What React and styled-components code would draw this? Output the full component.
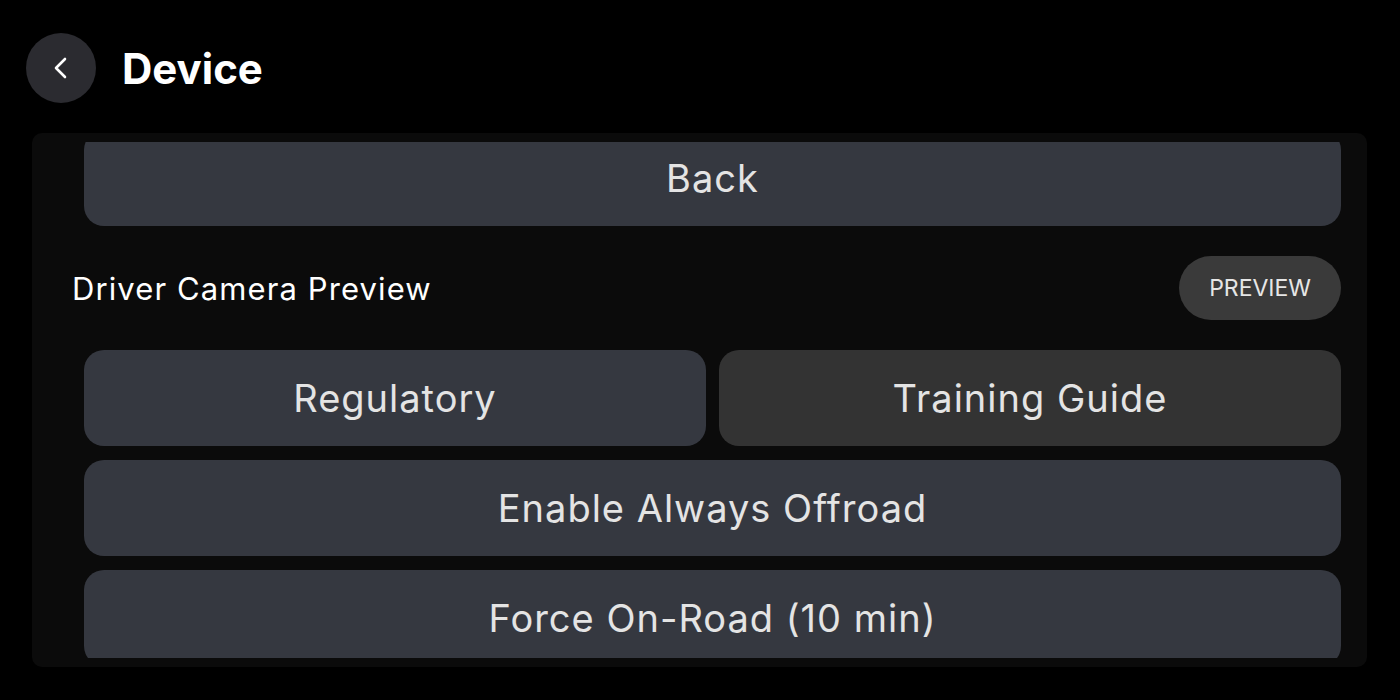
import React, { useLayoutEffect, useRef } from 'react';
import styled, { createGlobalStyle } from 'styled-components';

const GlobalStyle = createGlobalStyle`
  html, body {
    margin: 0;
    padding: 0;
    background: #000;
    font-family: Inter, "Noto Sans", sans-serif;
    -webkit-font-smoothing: antialiased;
  }
  * {
    box-sizing: border-box;
  }
`;

const Page = styled.div`
  width: 1400px;
  height: 700px;
  padding: 33px 33px 33px 26px;
  display: flex;
  flex-direction: column;
  gap: 30px;
  background: #000;
  overflow: hidden;
`;

const Header = styled.header`
  display: flex;
  align-items: center;
  gap: 26px;
  height: 70px;
  flex-shrink: 0;
`;

const BackCircle = styled.button`
  width: 70px;
  height: 70px;
  border-radius: 50%;
  border: none;
  padding: 0;
  background: #2b2b30;
  color: #fff;
  display: flex;
  align-items: center;
  justify-content: center;
  cursor: pointer;
`;

const Title = styled.h1`
  margin: 0;
  font-size: 42px;
  font-weight: 700;
  color: #fff;
`;

const Panel = styled.section`
  flex: 1;
  margin-left: 6px;
  background: #0b0b0b;
  border-radius: 10px;
  padding: 9px 0;
  display: flex;
  min-height: 0;
`;

const ScrollArea = styled.div`
  flex: 1;
  overflow-y: auto;
  scrollbar-width: none;
  padding: 0 26px 0 40px;

  &::-webkit-scrollbar {
    display: none;
  }
`;

const List = styled.div`
  display: flex;
  flex-direction: column;
  gap: 14px;
  padding-bottom: 20px;
`;

const WideButton = styled.button`
  flex: ${p => (p.$half ? '1 1 0' : '0 0 auto')};
  margin-left: ${p => (p.$half ? '0' : '12px')};
  height: 96px;
  border: none;
  border-radius: 20px;
  background: ${p => (p.$muted ? '#333333' : '#353840')};
  color: #e4e4e4;
  font-family: Inter, "Noto Sans", sans-serif;
  font-size: 38px;
  letter-spacing: 1px;
  font-weight: 400;
  display: flex;
  align-items: center;
  justify-content: center;
  cursor: pointer;
`;

const ButtonRow = styled.div`
  display: flex;
  flex-shrink: 0;
  gap: 13px;
  margin-left: 12px;
`;

const SettingRow = styled.div`
  display: flex;
  flex-shrink: 0;
  align-items: center;
  justify-content: space-between;
  padding: 16px 0;
`;

const SettingLabel = styled.span`
  font-size: 31px;
  letter-spacing: 1.1px;
  color: #fff;
  font-weight: 400;
`;

const Pill = styled.button`
  height: 64px;
  padding: 0 30px;
  border: none;
  border-radius: 32px;
  background: #3a3a3a;
  color: #e6e6e6;
  font-family: Inter, "Noto Sans", sans-serif;
  font-size: 23px;
  font-weight: 400;
  cursor: pointer;
`;

const Chevron = () => (
  <svg width="20" height="24" viewBox="0 0 20 24" fill="none">
    <polyline
      points="14,3 5,12 14,21"
      stroke="#fff"
      strokeWidth="2.6"
      strokeLinecap="round"
      strokeLinejoin="round"
    />
  </svg>
);

const App = () => {
  const scrollRef = useRef(null);

  useLayoutEffect(() => {
    if (scrollRef.current) scrollRef.current.scrollTop = 12;
  }, []);

  return (
    <>
      <GlobalStyle />
      <Page>
        <Header>
          <BackCircle aria-label="Back">
            <Chevron />
          </BackCircle>
          <Title>Device</Title>
        </Header>

        <Panel>
          <ScrollArea ref={scrollRef}>
            <List>
              <WideButton>Back</WideButton>
              <SettingRow>
                <SettingLabel>Driver Camera Preview</SettingLabel>
                <Pill>PREVIEW</Pill>
              </SettingRow>
              <ButtonRow>
                <WideButton $half>Regulatory</WideButton>
                <WideButton $half $muted>Training Guide</WideButton>
              </ButtonRow>
              <WideButton>Enable Always Offroad</WideButton>
              <WideButton>Force On-Road (10 min)</WideButton>
            </List>
          </ScrollArea>
        </Panel>
      </Page>
    </>
  );
};

export default App;
